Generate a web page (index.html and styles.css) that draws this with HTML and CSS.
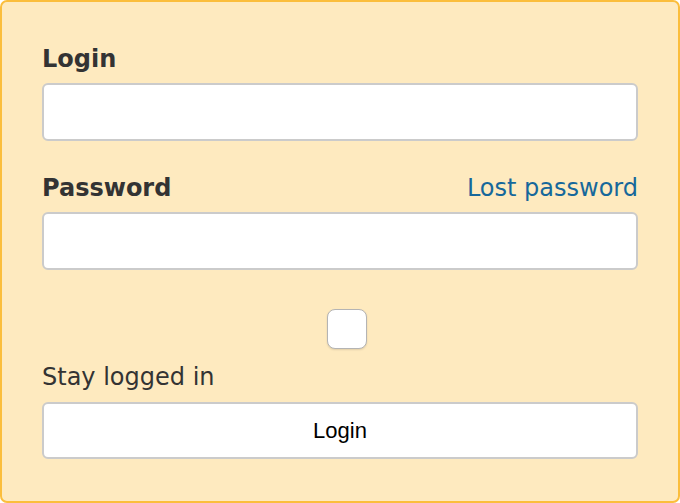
FILE: index.html
```html
<!DOCTYPE html>
<html lang="en">
  <head>
    <meta charset="UTF-8" />
    <meta name="viewport" content="width=device-width, initial-scale=1.0" />
    <title>Login</title>
    <link rel="stylesheet" href="styles.css">
  </head>
  <body>
    <form class="login-box" action="/login" method="post">
      <div class="wrap">
        <div class="label-row">
          <label for="login">Login</label>
        </div>
        <input type="text" id="login" name="login" />
      </div>
      <div class="wrap">
        <div class="label-row">
          <label for="password">Password</label>
          <a href="/lost-password">Lost password</a>
        </div>
        <input type="password" id="password" name="password" />
      </div>
      <div class="check-row">
        <input type="checkbox" id="remember" name="remember" />
      </div>
      <label class="remember-label" for="remember">Stay logged in</label>
      <button type="submit">Login</button>
    </form>
  </body>
</html>
```

FILE: styles.css
```css
* {
  margin: 0;
  padding: 0;
  box-sizing: border-box;
}

body {
  font-family: "DejaVu Sans", Verdana, sans-serif;
  font-size: 24px;
  line-height: 28px;
  color: #333;
}

a {
  text-decoration: none;
  color: #16689b;
}

.login-box {
  display: flex;
  flex-direction: column;
  height: 503px;
  padding: 43px 40px 0;
  background-color: #feeabf;
  border: 2px solid #fbbe3c;
  border-radius: 7px;
}

.wrap {
  display: flex;
  flex-direction: column;
  gap: 10px;
  margin-bottom: 33px;
}

.label-row {
  display: flex;
  justify-content: space-between;
  align-items: baseline;
}

.label-row label {
  font-weight: bold;
}

input[type="text"],
input[type="password"] {
  height: 58px;
  padding: 0 12px;
  font: inherit;
  background-color: #fff;
  border: 2px solid #cbcbcb;
  border-radius: 6px;
}

.check-row {
  display: flex;
  justify-content: center;
  margin-top: 6px;
}

input[type="checkbox"] {
  appearance: none;
  width: 40px;
  height: 40px;
  margin-left: 14px;
  background-color: #fff;
  border: 1px solid #b4b4b4;
  border-radius: 8px;
  box-shadow: 0 1px 2px rgba(0, 0, 0, 0.12);
}

.remember-label {
  margin-top: 14px;
}

button[type="submit"] {
  height: 57px;
  margin-top: 11px;
  font-family: "Liberation Sans", Arial, sans-serif;
  font-size: 22px;
  color: #000;
  background-color: #fff;
  border: 2px solid #cbcbcb;
  border-radius: 6px;
}
```
